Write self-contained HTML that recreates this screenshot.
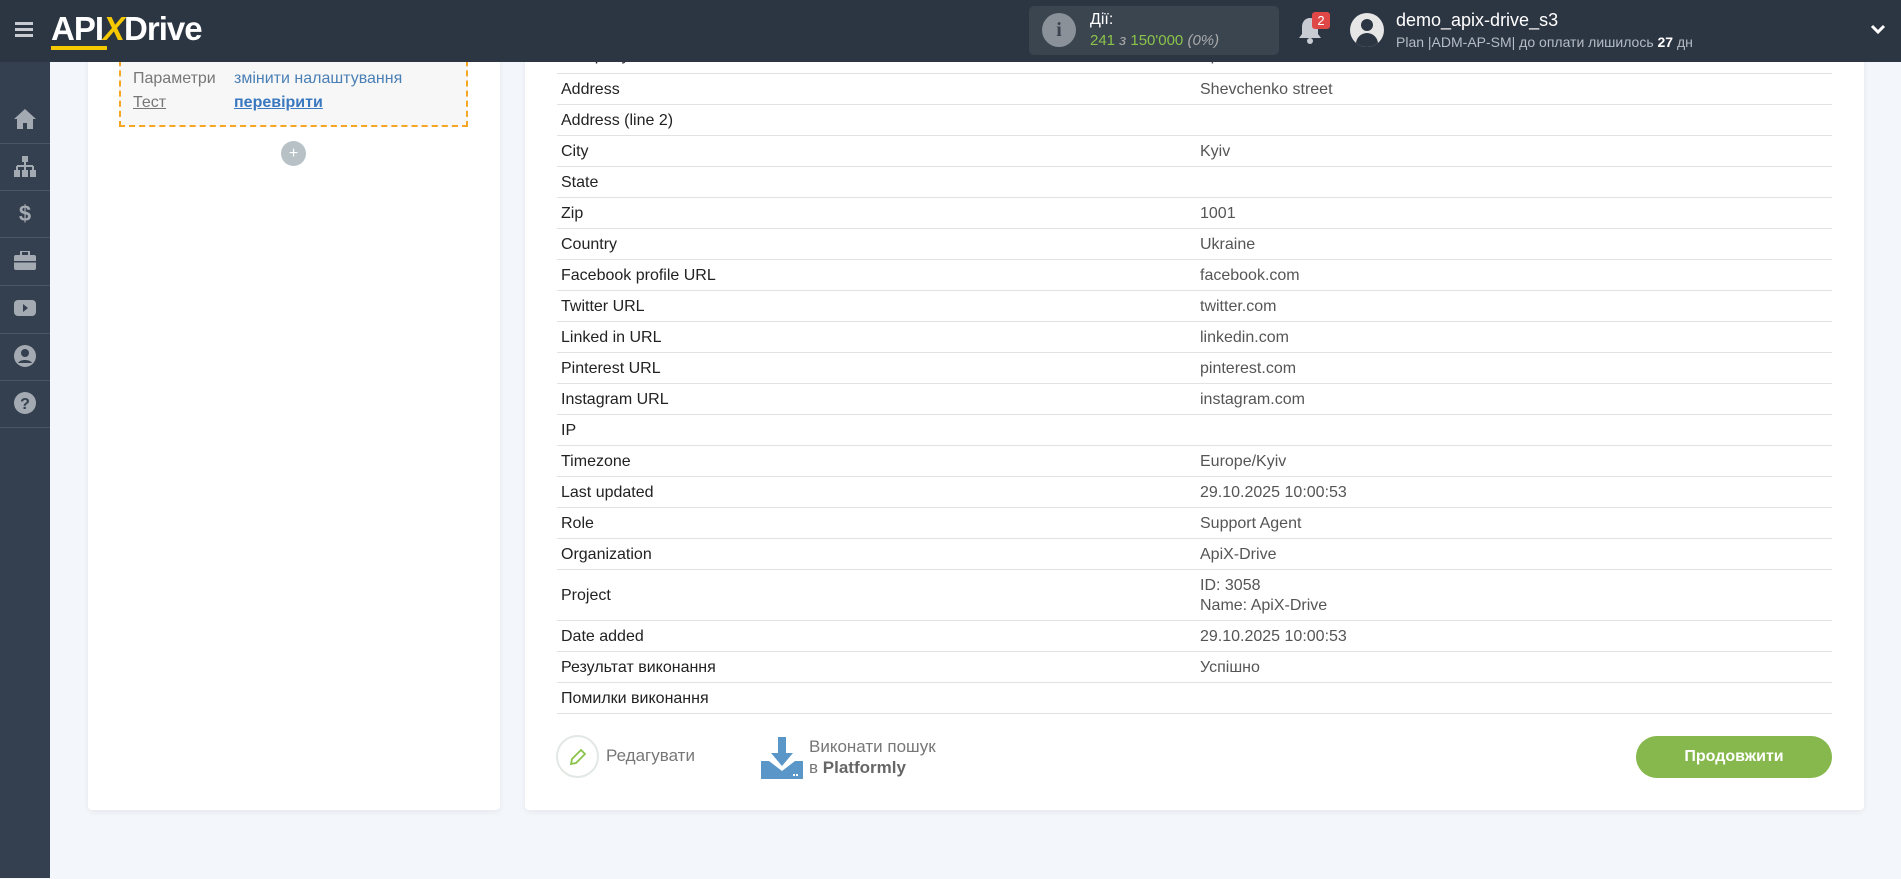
<!DOCTYPE html>
<html><head><meta charset="utf-8"><style>
*{box-sizing:border-box;margin:0;padding:0}
body{width:1901px;height:878px;overflow:hidden;background:#f3f6fa;font-family:"Liberation Sans",sans-serif;position:relative}
.hdr{position:absolute;left:0;top:0;width:1901px;height:62px;background:#2c3542;z-index:5}
.side{position:absolute;left:0;top:62px;width:50px;height:816px;background:#344050}
.side .sep{position:absolute;left:0;width:50px;height:1px;background:#4a5666}
.side svg{position:absolute;left:13px}
.card{position:absolute;background:#fff;border-radius:4px;box-shadow:0 2px 6px rgba(0,0,0,.06)}
.row{position:absolute;left:557px;width:1275px;border-bottom:1px solid #e2e2e2;font-size:16px;color:#222}
.row .l{position:absolute;left:4px}
.row .v{position:absolute;left:643px;color:#555}
#t{position:absolute;left:0;top:1px;width:1901px;height:878px}
</style></head><body>
<div class="hdr">
 <div style="position:absolute;left:15px;top:22px;width:18px;height:3px;background:#c8ccd2;box-shadow:0 6px 0 #c8ccd2,0 12px 0 #c8ccd2"></div>
 <div style="position:absolute;left:51px;top:10px;font-size:33px;font-weight:bold;color:#fff;letter-spacing:-1px">API<span style="color:#f5c800;font-style:italic">X</span>Drive</div>
 <div style="position:absolute;left:51px;top:46px;width:56px;height:4px;background:#f5c800"></div>
 <div style="position:absolute;left:1029px;top:6px;width:250px;height:49px;background:#3a4550;border-radius:5px">
  <div style="position:absolute;left:13px;top:7px;width:34px;height:34px;border-radius:50%;background:#8a9199;color:#3a4550;font:bold 20px 'Liberation Serif',serif;text-align:center;line-height:34px">i</div>
  <div style="position:absolute;left:61px;top:5px;color:#fff;font-size:16px">Дії:</div>
  <div style="position:absolute;left:61px;top:26px;color:#8bc34a;font-size:15px">241 <span style="color:#aaa;font-style:italic">з</span> 150'000 <span style="color:#aaa;font-style:italic">(0%)</span></div>
 </div>
 <svg style="position:absolute;left:1297px;top:16px" width="26" height="30" viewBox="0 0 26 30"><path d="M13 2c-5 0-8 4-8 9v7l-3 4h22l-3-4v-7c0-5-3-9-8-9z" fill="#c8ccd2"/><circle cx="13" cy="25" r="3" fill="#c8ccd2"/></svg>
 <div style="position:absolute;left:1312px;top:12px;width:18px;height:17px;background:#e04848;border-radius:3px;color:#fff;font-size:13px;text-align:center;line-height:17px">2</div>
 <div style="position:absolute;left:1350px;top:13px;width:34px;height:34px;border-radius:50%;background:#e6e6e6;overflow:hidden">
  <div style="position:absolute;left:11px;top:6px;width:12px;height:12px;border-radius:50%;background:#2c3542"></div>
  <div style="position:absolute;left:6px;top:20px;width:22px;height:14px;border-radius:11px 11px 0 0;background:#2c3542"></div>
 </div>
 <div style="position:absolute;left:1396px;top:10px;color:#fff;font-size:18px">demo_apix-drive_s3</div>
 <div style="position:absolute;left:1396px;top:34px;color:#b5bcc5;font-size:14px">Plan |ADM-AP-SM| до оплати лишилось <b style="color:#fff">27</b> дн</div>
 <svg style="position:absolute;left:1870px;top:24px" width="16" height="12" viewBox="0 0 16 12"><path d="M2 2l6 6 6-6" stroke="#fff" stroke-width="3" fill="none"/></svg>
</div>
<div class="side">
 <svg style="top:46px" width="24" height="22" viewBox="0 0 24 22"><path d="M12 1L1 11h3v10h6v-6h4v6h6V11h3z" fill="#a4aab2"/></svg>
 <div class="sep" style="top:81px"></div>
 <svg style="top:94px" width="24" height="22" viewBox="0 0 24 22"><rect x="9" y="0" width="6" height="6" fill="#a4aab2"/><path d="M12 6v4M4 10h16M4 10v4M12 10v4M20 10v4" stroke="#a4aab2" stroke-width="2"/><rect x="1" y="14" width="6" height="7" fill="#a4aab2"/><rect x="9" y="14" width="6" height="7" fill="#a4aab2"/><rect x="17" y="14" width="6" height="7" fill="#a4aab2"/></svg>
 <div class="sep" style="top:128px"></div>
 <div style="position:absolute;left:0;top:139px;width:50px;text-align:center;color:#a4aab2;font-size:22px;font-weight:bold">$</div>
 <div class="sep" style="top:175px"></div>
 <svg style="top:189px" width="24" height="20" viewBox="0 0 24 20"><rect x="8" y="0" width="8" height="5" fill="none" stroke="#a4aab2" stroke-width="2"/><rect x="1" y="4" width="22" height="15" rx="2" fill="#a4aab2"/><rect x="1" y="10" width="22" height="1.5" fill="#344050"/></svg>
 <div class="sep" style="top:223px"></div>
 <svg style="top:236px" width="24" height="20" viewBox="0 0 24 20"><rect x="1" y="2" width="22" height="16" rx="4" fill="#a4aab2"/><path d="M10 6l5 4-5 4z" fill="#344050"/></svg>
 <div class="sep" style="top:271px"></div>
 <svg style="top:282px" width="24" height="24" viewBox="0 0 24 24"><circle cx="12" cy="12" r="11" fill="#a4aab2"/><circle cx="12" cy="9" r="4" fill="#344050"/><path d="M5 19c2-4 12-4 14 0" fill="#344050"/></svg>
 <div class="sep" style="top:318px"></div>
 <svg style="top:329px" width="24" height="24" viewBox="0 0 24 24"><circle cx="12" cy="12" r="11" fill="#a4aab2"/><text x="12" y="18" text-anchor="middle" font-size="16" font-weight="bold" fill="#344050" font-family="Liberation Sans">?</text></svg>
 <div class="sep" style="top:365px"></div>
</div>
<div class="card" style="left:88px;top:40px;width:412px;height:770px">
 <div style="position:absolute;left:31px;top:0;width:349px;height:87px;border:2px dashed #f5a623;border-top:none;background:#f7f7f7"></div>
 <div style="position:absolute;left:45px;top:30px;font-size:16px;color:#777">Параметри</div>
 <div style="position:absolute;left:146px;top:30px;font-size:16px;color:#4a7fb5">змінити налаштування</div>
 <div style="position:absolute;left:45px;top:54px;font-size:16px;color:#777;text-decoration:underline">Тест</div>
 <div style="position:absolute;left:146px;top:54px;font-size:16px;color:#3a78c0;font-weight:bold;text-decoration:underline">перевірити</div>
 <div style="position:absolute;left:193px;top:101px;width:25px;height:25px;border-radius:50%;background:#b8c2c6;color:#fff;text-align:center;line-height:25px;font-size:16px">+</div>
</div>
<div class="card" style="left:525px;top:40px;width:1339px;height:770px"></div>
<div id="t">
<div class="row" style="top:42px;height:31px"><span class="l" style="top:4px">Company</span><span class="v" style="top:4px">ApiX-Drive</span></div>
<div class="row" style="top:73px;height:31px"><span class="l" style="top:7px">Address</span><span class="v" style="top:7px">Shevchenko street</span></div>
<div class="row" style="top:104px;height:31px"><span class="l" style="top:7px">Address (line 2)</span></div>
<div class="row" style="top:135px;height:31px"><span class="l" style="top:7px">City</span><span class="v" style="top:7px">Kyiv</span></div>
<div class="row" style="top:166px;height:31px"><span class="l" style="top:7px">State</span></div>
<div class="row" style="top:197px;height:31px"><span class="l" style="top:7px">Zip</span><span class="v" style="top:7px">1001</span></div>
<div class="row" style="top:228px;height:31px"><span class="l" style="top:7px">Country</span><span class="v" style="top:7px">Ukraine</span></div>
<div class="row" style="top:259px;height:31px"><span class="l" style="top:7px">Facebook profile URL</span><span class="v" style="top:7px">facebook.com</span></div>
<div class="row" style="top:290px;height:31px"><span class="l" style="top:7px">Twitter URL</span><span class="v" style="top:7px">twitter.com</span></div>
<div class="row" style="top:321px;height:31px"><span class="l" style="top:7px">Linked in URL</span><span class="v" style="top:7px">linkedin.com</span></div>
<div class="row" style="top:352px;height:31px"><span class="l" style="top:7px">Pinterest URL</span><span class="v" style="top:7px">pinterest.com</span></div>
<div class="row" style="top:383px;height:31px"><span class="l" style="top:7px">Instagram URL</span><span class="v" style="top:7px">instagram.com</span></div>
<div class="row" style="top:414px;height:31px"><span class="l" style="top:7px">IP</span></div>
<div class="row" style="top:445px;height:31px"><span class="l" style="top:7px">Timezone</span><span class="v" style="top:7px">Europe/Kyiv</span></div>
<div class="row" style="top:476px;height:31px"><span class="l" style="top:7px">Last updated</span><span class="v" style="top:7px">29.10.2025 10:00:53</span></div>
<div class="row" style="top:507px;height:31px"><span class="l" style="top:7px">Role</span><span class="v" style="top:7px">Support Agent</span></div>
<div class="row" style="top:538px;height:31px"><span class="l" style="top:7px">Organization</span><span class="v" style="top:7px">ApiX-Drive</span></div>
<div class="row" style="top:569px;height:51px"><span class="l" style="top:17px">Project</span><span class="v" style="top:6px;line-height:20px">ID: 3058<br>Name: ApiX-Drive</span></div>
<div class="row" style="top:620px;height:31px"><span class="l" style="top:7px">Date added</span><span class="v" style="top:7px">29.10.2025 10:00:53</span></div>
<div class="row" style="top:651px;height:31px"><span class="l" style="top:7px">Результат виконання</span><span class="v" style="top:7px">Успішно</span></div>
<div class="row" style="top:682px;height:31px"><span class="l" style="top:7px">Помилки виконання</span></div>
</div>
<div style="position:absolute;left:556px;top:735px;width:43px;height:43px;border-radius:50%;border:2px solid #e2e8e4"></div>
<svg style="position:absolute;left:568px;top:747px" width="20" height="20" viewBox="0 0 20 20"><path d="M3 17l1-5L13 3l4 4-9 9z" fill="none" stroke="#8bc34a" stroke-width="1.8"/></svg>
<div style="position:absolute;left:606px;top:746px;font-size:17px;color:#777">Редагувати</div>
<svg style="position:absolute;left:761px;top:737px" width="42" height="42" viewBox="0 0 42 42"><path d="M17 0h8v16h7L21 29 10 16h7z" fill="#5a96c8"/><path d="M0 24h8l13 10 13-10h8v18H0z" fill="#5a96c8"/><rect x="32" y="37" width="2" height="2" fill="#fff"/><rect x="35" y="37" width="2" height="2" fill="#fff"/></svg>
<div style="position:absolute;left:809px;top:736px;font-size:17px;color:#777;line-height:21px">Виконати пошук<br>в <b style="color:#666">Platformly</b></div>
<div style="position:absolute;left:1636px;top:736px;width:196px;height:42px;border-radius:21px;background:#86b84d;color:#fff;font-size:16px;font-weight:bold;text-align:center;line-height:42px">Продовжити</div>
</body></html>
